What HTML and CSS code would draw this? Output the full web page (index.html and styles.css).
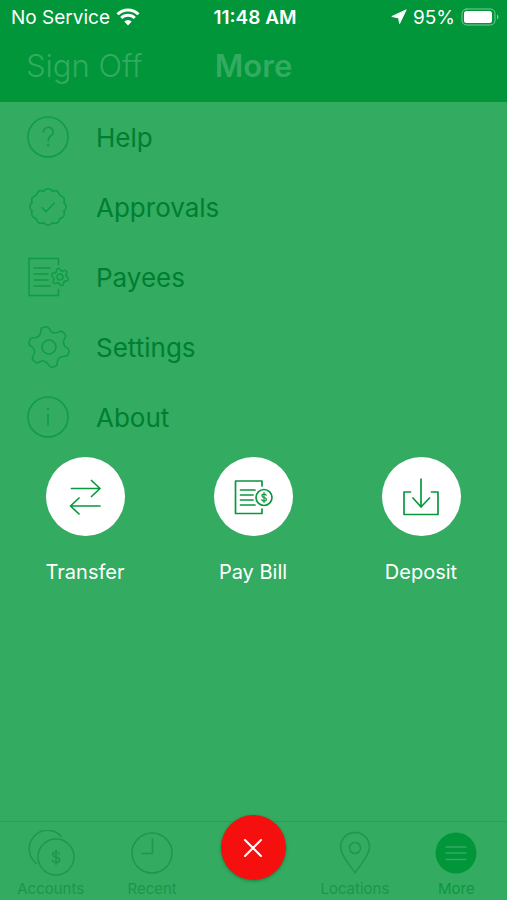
FILE: index.html
```html
<!DOCTYPE html>
<html lang="en">
<head>
  <meta charset="UTF-8" />
  <meta name="viewport" content="width=device-width, initial-scale=1.0" />
  <title>More</title>
  <link rel="stylesheet" href="styles.css">
</head>
<body>
  <!-- shared icon shapes -->
  <svg class="defs" width="0" height="0" aria-hidden="true">
    <defs>
      <path id="tooth" vector-effect="non-scaling-stroke" d="M-7.5-13Q-5-14.4-4.4-17.4Q-3.8-20.4-1.4-20.4H1.4Q3.8-20.4 4.4-17.4Q5-14.4 7.5-13" />
      <g id="gear">
        <use href="#tooth" />
        <use href="#tooth" transform="rotate(60)" />
        <use href="#tooth" transform="rotate(120)" />
        <use href="#tooth" transform="rotate(180)" />
        <use href="#tooth" transform="rotate(240)" />
        <use href="#tooth" transform="rotate(300)" />
        <circle r="7" vector-effect="non-scaling-stroke" />
      </g>
      <path id="scallop" d="M-4.3-16Q0-20.4 4.3-16" />
      <g id="scallops">
        <use href="#scallop" />
        <use href="#scallop" transform="rotate(30)" />
        <use href="#scallop" transform="rotate(60)" />
      </g>
    </defs>
  </svg>

  <div class="app">
    <div class="status-bar">
      <div class="status-left">
        <span>No Service</span>
        <svg width="24" height="18" viewBox="0 0 24 18">
          <path class="wifi" d="M1.5 6.2a15 15 0 0 1 21 0M5.2 10a9.7 9.7 0 0 1 13.6 0" />
          <path class="solid" d="M12 17.4l-3.7-3.8a5.3 5.3 0 0 1 7.4 0z" />
        </svg>
      </div>
      <span class="time">11:48 AM</span>
      <div class="status-right">
        <svg width="16" height="16" viewBox="0 0 16 16"><path class="solid pointer" d="M15 1.2L8.6 14.5 7.6 8.8 1.2 7.6z" /></svg>
        <span>95%</span>
        <svg width="38" height="18" viewBox="0 0 38 18">
          <rect class="battery-case" x="1" y="1" width="33" height="16" rx="4.5" />
          <rect class="solid" x="3" y="3" width="28" height="12" rx="2.5" />
          <path class="battery-tip" d="M36 6.5q1.5.8 1.5 2.5t-1.5 2.5z" />
        </svg>
      </div>
    </div>

    <header class="nav">
      <button type="button" class="sign-off">Sign Off</button>
      <h1>More</h1>
    </header>

    <main>
      <ul class="menu">
        <li>
          <a href="#">
            <svg class="icon" width="44" height="44" viewBox="-22 -22 44 44">
              <circle r="20" />
              <path d="M-4.5-4.8a4.8 4.6 0 1 1 7 3.8Q.2.4.2 4" />
              <circle class="dot" cx=".2" cy="8" r="1.2" />
            </svg>
            <span>Help</span>
          </a>
        </li>
        <li>
          <a href="#">
            <svg class="icon" width="44" height="44" viewBox="-22 -22 44 44">
              <use href="#scallops" />
              <use href="#scallops" transform="rotate(90)" />
              <use href="#scallops" transform="rotate(180)" />
              <use href="#scallops" transform="rotate(270)" />
              <path d="M-6 .8L-2 4.6 6.2-3.8" />
            </svg>
            <span>Approvals</span>
          </a>
        </li>
        <li>
          <a href="#">
            <svg class="icon" width="44" height="44" viewBox="-22 -22 44 44">
              <path d="M10.5-12.5V-18.5H-19V18.5H10.5V12.5" />
              <path d="M-14-9H2M-14-3H0M-14 3H0M-14 9H2" />
              <use href="#gear" transform="translate(12 0) rotate(-13) scale(.42)" />
            </svg>
            <span>Payees</span>
          </a>
        </li>
        <li>
          <a href="#">
            <svg class="icon" width="44" height="44" viewBox="-22 -22 44 44">
              <use href="#gear" transform="translate(1 0) rotate(-13)" />
            </svg>
            <span>Settings</span>
          </a>
        </li>
        <li>
          <a href="#">
            <svg class="icon" width="44" height="44" viewBox="-22 -22 44 44">
              <circle r="20" />
              <path d="M0-3V8.5" />
              <circle class="dot" cy="-8" r="1.2" />
            </svg>
            <span>About</span>
          </a>
        </li>
      </ul>

      <div class="actions">
        <button type="button" class="action">
          <span class="bubble">
            <svg width="44" height="44" viewBox="0 0 44 44"><path d="M8.5 13.5H37M28.5 5.5l8.5 8-8.5 8M37 31H8M16 23l-8.5 8 8.5 8" /></svg>
          </span>
          <span>Transfer</span>
        </button>
        <button type="button" class="action">
          <span class="bubble">
            <svg width="44" height="44" viewBox="0 0 44 44">
              <path d="M31 11V6H4.5V38.5H31V34" />
              <path d="M9.5 15H24M9.5 20H22M9.5 25H22M9.5 30H24" />
              <circle cx="33" cy="22.5" r="8" />
              <path class="coin" d="M35.2 20.2q-.5-1.1-2.2-1.1-2.1 0-2.1 1.6 0 1.4 2.1 1.8 2.3.4 2.3 1.9 0 1.6-2.3 1.6-1.8 0-2.3-1.2M33 17.5v10" />
            </svg>
          </span>
          <span>Pay Bill</span>
        </button>
        <button type="button" class="action">
          <span class="bubble">
            <svg width="44" height="44" viewBox="0 0 44 44"><path d="M11.5 17H5V39.5H39V17H32.5M22 4V32M14 23l8 9 8.5-9" /></svg>
          </span>
          <span>Deposit</span>
        </button>
      </div>
    </main>

    <nav class="tab-bar">
      <a href="#">
        <svg width="48" height="46" viewBox="0 0 48 46">
          <path d="M9.3 33.3A18.4 18.4 0 1 1 34.3 6.5" />
          <circle cx="29" cy="27" r="18" />
          <path d="M32.5 24q-.7-2-3.5-2-3.2 0-3.2 2.4 0 2 3.2 2.6 3.6.6 3.6 2.9 0 2.5-3.6 2.5-2.9 0-3.6-2.2M29 20v14.5" />
        </svg>
        <span>Accounts</span>
      </a>
      <a href="#">
        <svg width="48" height="46" viewBox="0 0 48 46">
          <circle cx="24" cy="23" r="20" />
          <path d="M24.5 9V23.5H14" />
        </svg>
        <span>Recent</span>
      </a>
      <button type="button" class="close" aria-label="Close">
        <svg width="20" height="20" viewBox="0 0 20 20"><path d="M2 2l16 16M18 2L2 18" /></svg>
      </button>
      <a href="#">
        <svg width="48" height="46" viewBox="0 0 48 46">
          <path d="M24 43C20 36 9.5 26 9.5 17a14.5 14.5 0 0 1 29 0C38.5 26 28 36 24 43z" />
          <circle cx="24" cy="18" r="5.5" />
        </svg>
        <span>Locations</span>
      </a>
      <a href="#" class="active">
        <svg width="48" height="46" viewBox="0 0 48 46">
          <circle class="disc" cx="24" cy="23" r="20.5" />
          <path class="lines" d="M14 17H34M14 23H34M14 29.5H34" />
        </svg>
        <span>More</span>
      </a>
    </nav>
  </div>
</body>
</html>
```

FILE: styles.css
```css
* {
  box-sizing: border-box;
}

body {
  margin: 0;
  font-family: Inter, "Liberation Sans", sans-serif;
  background-color: #33ab61;
}

button {
  border: none;
  padding: 0;
  background: none;
  font-family: inherit;
  cursor: pointer;
}

a {
  color: inherit;
  text-decoration: none;
}

svg {
  display: block;
  flex: none;
  fill: none;
  stroke-linecap: round;
  stroke-linejoin: round;
}

.defs {
  position: absolute;
}

.solid {
  fill: #fff;
}

.app {
  display: flex;
  flex-direction: column;
  min-height: 100vh;
}

/* status bar */
.status-bar {
  display: grid;
  grid-template-columns: 1fr auto 1fr;
  align-items: center;
  height: 34px;
  padding: 0 8px 0 11px;
  background-color: #009639;
  color: #fff;
  font-size: 19px;
}

.status-left,
.status-right {
  display: flex;
  align-items: center;
  gap: 6px;
}

.status-right {
  justify-content: flex-end;
}

.time {
  font-weight: 600;
}

.wifi {
  stroke: #fff;
  stroke-width: 3;
  stroke-linecap: butt;
}

.pointer {
  stroke: #fff;
  stroke-width: 1;
}

.battery-case {
  stroke: #7fca9b;
  stroke-width: 1;
}

.battery-tip {
  fill: #7fca9b;
}

/* header */
.nav {
  display: grid;
  grid-template-columns: 1fr auto 1fr;
  align-items: center;
  height: 68px;
  padding: 0 26px 6px;
  background-color: #009639;
  color: #33ab61;
}

.sign-off {
  justify-self: start;
  color: inherit;
  font-size: 31px;
  font-weight: 300;
}

.nav h1 {
  margin: 0;
  font-size: 31px;
  font-weight: 600;
}

main {
  flex: 1;
}

/* menu */
.menu {
  margin: 0;
  padding: 0;
  list-style: none;
}

.menu a {
  display: flex;
  align-items: center;
  gap: 26px;
  height: 70px;
  padding-left: 26px;
  color: #007f31;
  font-size: 26px;
}

.menu li + li {
  background: linear-gradient(#31aa5f, #31aa5f) 96px 0 / 100% 1px no-repeat;
}

.icon {
  stroke: #0f9c46;
  stroke-width: 1.5;
}

.dot {
  fill: #0f9c46;
  stroke: none;
}

/* quick actions */
.actions {
  display: grid;
  grid-template-columns: repeat(3, 1fr);
  padding: 5px 2px 0 1px;
}

.action {
  display: flex;
  flex-direction: column;
  align-items: center;
  gap: 24px;
  color: #fff;
  font-size: 20px;
  line-height: 24px;
}

.bubble {
  display: flex;
  align-items: center;
  justify-content: center;
  width: 79px;
  height: 79px;
  border-radius: 50%;
  background-color: #fff;
}

.bubble svg {
  stroke: #0a983f;
  stroke-width: 1.7;
}

.bubble .coin {
  stroke-width: 1.2;
}

/* tab bar */
.tab-bar {
  display: grid;
  grid-template-columns: repeat(5, 1fr);
  justify-items: center;
  height: 79px;
  border-top: 1px solid #2a9f57;
  color: #1f954b;
  font-size: 15px;
  line-height: 18px;
}

.tab-bar a {
  display: flex;
  flex-direction: column;
  align-items: center;
  gap: 4px;
  padding-top: 8px;
}

.tab-bar svg {
  stroke: #1f974c;
  stroke-width: 1.5;
}

.tab-bar .active {
  color: #0c9740;
}

.tab-bar .disc {
  fill: #009639;
  stroke: none;
}

.tab-bar .lines {
  stroke: #33ab61;
}

.tab-bar .close {
  display: flex;
  align-items: center;
  justify-content: center;
  width: 65px;
  height: 65px;
  margin-top: -7px;
  border-radius: 50%;
  background-color: #f50f0f;
  box-shadow: 0 1px 3px rgba(0, 80, 30, 0.5);
}

.tab-bar .close svg {
  stroke: #fff;
  stroke-width: 2;
}
```
